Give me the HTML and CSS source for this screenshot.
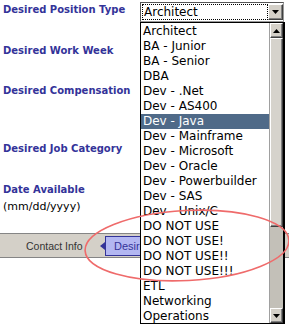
FILE: index.html
```html
<!DOCTYPE html>
<html>
<head>
<meta charset="utf-8">
<link rel="stylesheet" href="styles.css">
</head>
<body>
<div class="page">
  <div class="form">
    <div class="row r1">
      <div class="label">Desired Position Type</div>
      <div class="field">
        <div class="select">
          <span class="value">Architect</span>
          <span class="btn"><svg width="7" height="4" viewBox="0 0 7 4"><path d="M0 0h7L3.5 4z" fill="#000"/></svg></span>
        </div>
        <div class="list">
          <div class="items">
            <div class="item">Architect</div>
            <div class="item">BA - Junior</div>
            <div class="item">BA - Senior</div>
            <div class="item">DBA</div>
            <div class="item">Dev - .Net</div>
            <div class="item">Dev - AS400</div>
            <div class="item sel">Dev - Java</div>
            <div class="item">Dev - Mainframe</div>
            <div class="item">Dev - Microsoft</div>
            <div class="item">Dev - Oracle</div>
            <div class="item">Dev - Powerbuilder</div>
            <div class="item">Dev - SAS</div>
            <div class="item">Dev - Unix/C</div>
            <div class="item">DO NOT USE</div>
            <div class="item">DO NOT USE!</div>
            <div class="item">DO NOT USE!!</div>
            <div class="item">DO NOT USE!!!</div>
            <div class="item">ETL</div>
            <div class="item">Networking</div>
            <div class="item">Operations</div>
          </div>
          <div class="sb">
            <div class="sbtn"><svg width="7" height="4" viewBox="0 0 7 4"><path d="M3.5 0L7 4H0z" fill="#000"/></svg></div>
            <div class="thumb"></div>
            <div class="trough"></div>
            <div class="sbtn"><svg width="7" height="4" viewBox="0 0 7 4"><path d="M0 0h7L3.5 4z" fill="#000"/></svg></div>
          </div>
        </div>
      </div>
    </div>
    <div class="row r2"><div class="label">Desired Work Week</div></div>
    <div class="row r3"><div class="label">Desired Compensation</div></div>
    <div class="row r4"><div class="label">Desired Job Category</div></div>
    <div class="row r5">
      <div class="label">Date Available</div>
      <div class="sub">(mm/dd/yyyy)</div>
    </div>
  </div>
  <div class="tabs">
    <span class="tab">Contact Info</span>
    <span class="tab active">Desire</span>
  </div>
  <svg class="annot" width="289" height="326" viewBox="0 0 289 326">
    <ellipse cx="187" cy="245.5" rx="102" ry="35" transform="rotate(-3 187 245.5)" fill="none" stroke="#ef6b6b" stroke-width="1.6"/>
  </svg>
</div>
</body>
</html>
```
FILE: styles.css
```css
html, body {
  margin: 0;
  padding: 0;
  background: #fff;
}
.page {
  position: relative;
  width: 289px;
  height: 326px;
  overflow: hidden;
}
.form {
  position: relative;
  z-index: 2;
  padding: 2px 0 0 3px;
  display: flex;
  flex-direction: column;
}
.row {
  display: flex;
  align-items: flex-start;
}
.r1 { height: 42px; }
.r2 { height: 40px; }
.r3 { height: 58px; }
.r4 { height: 41px; }
.r5 { height: 50px; flex-direction: column; }
.label {
  font-family: "DejaVu Sans", Verdana, sans-serif;
  font-weight: bold;
  font-size: 10px;
  line-height: 14px;
  color: #333399;
  width: 137px;
  flex: none;
}
.r1 .label { margin-top: 1px; }
.sub {
  font-family: "DejaVu Sans", Verdana, sans-serif;
  font-size: 11px;
  line-height: 14px;
  margin-top: 3px;
  color: #000;
}
.field {
  position: relative;
}
.select {
  box-sizing: border-box;
  width: 144px;
  height: 20px;
  border: 1px solid #555;
  border-right-color: #999;
  border-bottom-color: #999;
  background: #fff;
  padding: 1px 0 1px 1px;
  display: flex;
}
.value {
  box-sizing: border-box;
  width: 126px;
  height: 16px;
  border: 1px dotted #000;
  font-family: "DejaVu Sans", sans-serif;
  font-size: 12px;
  line-height: 14px;
  padding-left: 1px;
  color: #000;
}
.btn, .sbtn {
  box-sizing: border-box;
  background: #d4d0c8;
  border: 1px solid;
  border-color: #fff #404040 #404040 #fff;
  box-shadow: inset -1px -1px #808080;
  display: flex;
  align-items: center;
  justify-content: center;
}
.btn {
  width: 15px;
  height: 16px;
}
.list {
  position: absolute;
  z-index: 5;
  left: 0;
  top: 20px;
  box-sizing: border-box;
  width: 145px;
  height: 302px;
  background: #fff;
  border: 1px solid #000;
  border-right-width: 2px;
  display: flex;
  overflow: hidden;
}
.items {
  flex: 1;
  padding-top: 1px;
  overflow: hidden;
}
.item {
  font-family: "DejaVu Sans", sans-serif;
  font-size: 12px;
  line-height: 15px;
  height: 15px;
  padding-left: 2px;
  color: #000;
  white-space: nowrap;
}
.item.sel {
  background: #4f6a88;
  color: #fff;
}
.sb {
  width: 13px;
  display: flex;
  flex-direction: column;
  border-left: 1px solid #a0a0a0;
}
.sbtn {
  height: 15px;
  flex: none;
}
.thumb {
  box-sizing: border-box;
  height: 189px;
  flex: none;
  background: #d6d3cc;
  border: 1px solid;
  border-color: #fff #404040 #404040 #fff;
  box-shadow: inset -1px -1px #808080;
}
.trough {
  flex: 1;
  background: #c3c0b8;
}
.tabs {
  position: relative;
  z-index: 1;
  box-sizing: border-box;
  height: 25px;
  background: #d4d0c8;
  border-top: 1px solid #858585;
  border-bottom: 1px solid #858585;
  display: flex;
  align-items: center;
  padding-left: 26px;
  font-family: "Liberation Sans", Arial, sans-serif;
  font-size: 10.5px;
  color: #333;
}
.tab {
  width: 74px;
  flex: none;
}
.tab.active {
  position: relative;
  box-sizing: border-box;
  width: 120px;
  height: 20px;
  margin-left: 5px;
  background: #b3b7f2;
  border: 1px solid #333399;
  color: #333399;
  padding-left: 8px;
  line-height: 18px;
  font-size: 11px;
}
.tab.active::before {
  content: "";
  position: absolute;
  left: -6px;
  top: 5px;
  border-right: 5px solid #333399;
  border-top: 4px solid transparent;
  border-bottom: 4px solid transparent;
}
.annot {
  position: absolute;
  z-index: 10;
  left: 0;
  top: 0;
  pointer-events: none;
}
```
